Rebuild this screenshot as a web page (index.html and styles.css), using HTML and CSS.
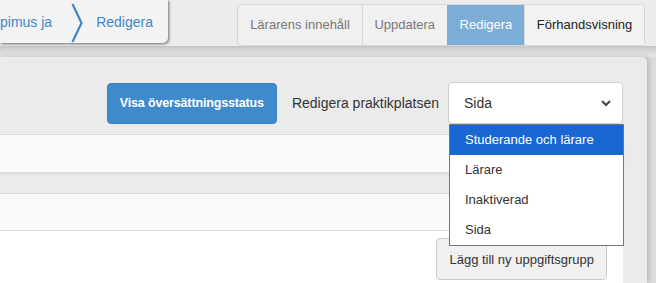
FILE: index.html
```html
<!DOCTYPE html>
<html lang="sv">
<head>
<meta charset="utf-8">
<link rel="stylesheet" href="styles.css">
</head>
<body>
<div class="header">
  <div class="crumbs">
    <span class="crumb">pimus ja</span>
    <svg class="sep" width="12" height="43" viewBox="0 0 12 43"><path d="M1.5 4 L10.5 23 L1.5 42" fill="none" stroke="#3d87c9" stroke-width="2.2"/></svg>
    <span class="crumb">Redigera</span>
  </div>
  <div class="tabs">
    <span class="tab">Lärarens innehåll</span>
    <span class="tab">Uppdatera</span>
    <span class="tab active">Redigera</span>
    <span class="tab dark">Förhandsvisning</span>
  </div>
</div>
<div class="shade"></div>
<div class="panel">
  <div class="toolbar">
    <button class="btn-primary">Visa översättningsstatus</button>
    <span class="label">Redigera praktikplatsen</span>
    <div class="select">
      <span>Sida</span>
      <svg width="10" height="7" viewBox="0 0 10 7"><path d="M1 1 L5 5 L9 1" fill="none" stroke="#444" stroke-width="2"/></svg>
    </div>
  </div>
  <div class="band band-top"></div>
  <div class="band band-bottom"></div>
  <div class="content">
    <button class="btn-default">Lägg till ny uppgiftsgrupp</button>
  </div>
</div>
<ul class="dropdown">
  <li class="selected">Studerande och lärare</li>
  <li>Lärare</li>
  <li>Inaktiverad</li>
  <li>Sida</li>
</ul>
</body>
</html>
```
FILE: styles.css
```css
html, body {
  margin: 0;
  padding: 0;
}
body {
  width: 656px;
  height: 283px;
  overflow: hidden;
  position: relative;
  background: #dcdcdc;
  font-family: "Liberation Sans", Arial, sans-serif;
  font-size: 14px;
  color: #333;
}
.header {
  display: flex;
  justify-content: space-between;
  align-items: flex-start;
  height: 46px;
  background: #ececec;
}
.crumbs {
  display: flex;
  align-items: center;
  height: 43px;
  width: 168px;
  box-sizing: border-box;
  background: #f3f3f3;
  border-radius: 0 0 5px 0;
  box-shadow: 1px 1px 3px rgba(0, 0, 0, 0.55);
}
.crumb {
  color: #3d87c9;
  white-space: nowrap;
}
.sep {
  margin: 0 13px 0 19px;
  flex: none;
}
.tabs {
  display: flex;
  margin: 4px 11px 0 0;
  border: 1px solid #d6d6d6;
  border-radius: 4px;
  overflow: hidden;
  background: #f0f0f0;
}
.tab {
  font-size: 13px;
  line-height: 40px;
  padding: 0 11.75px;
  color: #777;
  border-left: 1px solid #d9d9d9;
}
.tab:first-child {
  border-left: none;
}
.tab.active {
  background: #7badd7;
  color: #fff;
  border-left-color: #7badd7;
}
.tab.dark {
  color: #222;
  background: #f2f2f2;
}
.shade {
  height: 11px;
  background: linear-gradient(#c4c4c4, #d6d6d6 40%, #e6e6e6);
}
.panel {
  width: 647px;
  height: 226px;
  box-sizing: border-box;
  padding-right: 24px;
  background: #ebebeb;
  border-top-right-radius: 5px;
  box-shadow: 2px 0 5px rgba(0, 0, 0, 0.18);
  display: flex;
  flex-direction: column;
}
.toolbar {
  display: flex;
  justify-content: flex-end;
  align-items: center;
  padding: 25px 0 10px;
}
.btn-primary {
  font-family: inherit;
  font-size: 12.5px;
  font-weight: bold;
  color: #fff;
  background: #3f8acb;
  border: 1px solid #3a82c2;
  border-radius: 4px;
  height: 41px;
  padding: 0 12px;
  letter-spacing: -0.15px;
}
.label {
  margin: 0 9px 0 15px;
  color: #333;
}
.select {
  width: 175px;
  height: 42px;
  box-sizing: border-box;
  background: #fff;
  border: 1px solid #cfcfcf;
  border-radius: 4px;
  display: flex;
  align-items: center;
  justify-content: space-between;
  padding: 0 11px 0 15px;
  color: #333;
}
.band {
  background: #f9f9f9;
  border-top: 1px solid #dcdcdc;
  flex: none;
}
.band-top {
  height: 37px;
  box-shadow: 0 2px 3px rgba(0, 0, 0, 0.07);
  margin-bottom: 21px;
}
.band-bottom {
  height: 36px;
  border-bottom: 1px solid #dcdcdc;
}
.content {
  flex: 1;
  min-height: 0;
  overflow: hidden;
  background: #fff;
  display: flex;
  justify-content: flex-end;
  align-items: flex-start;
  padding: 7px 16px 0 0;
}
.btn-default {
  font-family: inherit;
  font-size: 13px;
  color: #333;
  background: #f0f0f0;
  border: 1px solid #c9c9c9;
  border-radius: 4px;
  height: 42px;
  padding: 0 12px;
  flex: none;
}
.dropdown {
  position: absolute;
  left: 449px;
  top: 124px;
  width: 175px;
  box-sizing: border-box;
  margin: 0;
  padding: 0;
  list-style: none;
  background: #fff;
  border: 1px solid #767676;
  font-size: 13px;
}
.dropdown li {
  height: 30px;
  line-height: 30px;
  padding-left: 15px;
  color: #333;
}
.dropdown li.selected {
  background: #1967d2;
  color: #fff;
}
```
